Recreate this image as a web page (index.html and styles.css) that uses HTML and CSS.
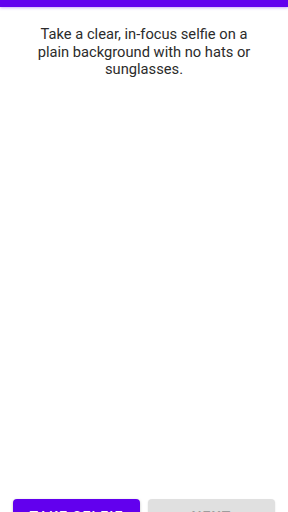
FILE: index.html
```html
<!DOCTYPE html>
<html lang="en">

<head>
    <meta charset="UTF-8">
    <title>Selfie</title>
    <link rel="stylesheet" href="styles.css">
</head>

<body>
    <div class="app">
        <div class="topBar"></div>
        <div class="content">
            <p class="hint">Take a clear, in-focus selfie on a plain background with no hats or sunglasses.</p>
        </div>
        <div class="actions">
            <button class="btn primary">TAKE SELFIE</button>
            <button class="btn disabled" disabled>NEXT</button>
        </div>
    </div>
</body>

</html>
```

FILE: styles.css
```css
html,
body {
    margin: 0;
    padding: 0;
    background-color: #ffffff;
    font-family: Roboto, "Noto Sans", sans-serif;
    overflow: hidden;
}

.app {
    display: flex;
    flex-direction: column;
    height: 548px;
}

.topBar {
    height: 7px;
    background-color: #6200ee;
    box-shadow: 0 1px 3px rgba(98, 0, 238, 0.35);
}

.content {
    flex: 1;
    padding: 19px 30px 0;
}

.hint {
    margin: 0;
    font-size: 14.7px;
    line-height: 17.5px;
    color: #2b2b2b;
    text-align: center;
}

.actions {
    display: flex;
    gap: 8px;
    padding: 0 13px 13px 13px;
}

.btn {
    flex: 1;
    height: 36px;
    border: none;
    border-radius: 4px;
    font-family: Roboto, "Noto Sans", sans-serif;
    font-size: 14px;
    font-weight: 500;
    letter-spacing: 1.2px;
}

.primary {
    background-color: #6200ee;
    color: #ffffff;
    box-shadow: 0 1px 3px rgba(0, 0, 0, 0.25);
}

.disabled {
    background-color: #e0e0e0;
    color: #9e9e9e;
    box-shadow: 0 1px 2px rgba(0, 0, 0, 0.12);
}
```
